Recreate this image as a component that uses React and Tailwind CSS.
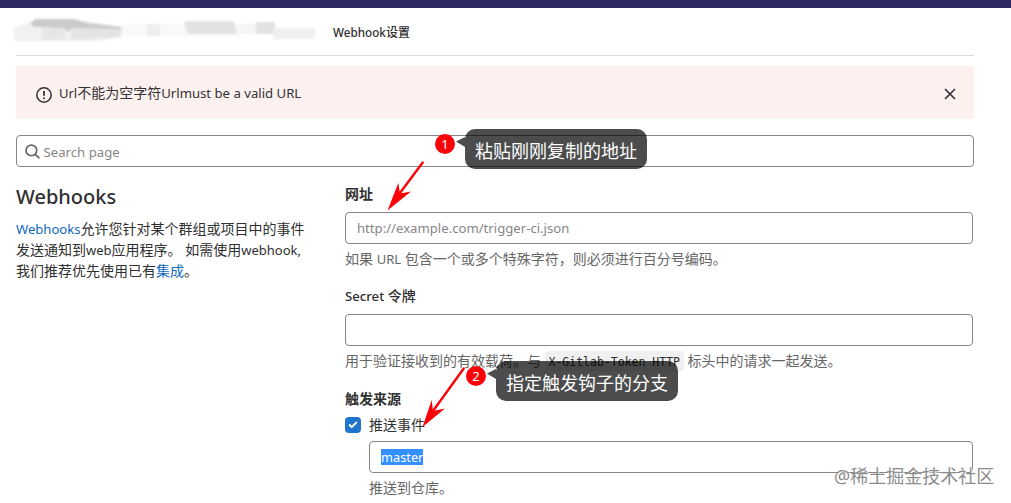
import { Check } from "lucide-react";

function Latin({ children, className = "text-[13px]" }) {
  return <span className={`leading-none ${className}`}>{children}</span>;
}

function Breadcrumb() {
  return (
    <div className="mr-[37px] ml-4 flex h-12 items-center border-b border-[#dbdbdb]">
      <svg className="-ml-1 h-9 w-[321px] shrink-0" viewBox="12 14 321 36" aria-hidden="true">
        <defs>
          <filter id="soft" x="-10%" y="-30%" width="120%" height="160%">
            <feGaussianBlur stdDeviation="1.2" />
          </filter>
        </defs>
        <g filter="url(#soft)">
          <path d="M14 27 L34 21 L85 21 L122 27 L122 37 L100 41 L14 41Z" fill="#f1f1f1" />
          <path d="M30 23 L36 19 L74 19 L88 23 L121 27 L121 30 L71 29 L68 32 L64 28 L34 27Z" fill="#cbcbcb" />
          <path d="M42 28 L65 28 L65 40 L42 40Z" fill="#e6e6e6" />
          <path d="M71 28 L121 29 L121 37 L71 40Z" fill="#e4e4e4" />
          <path d="M122 24h118v12h-118Z" fill="#f9f9f9" />
          <path d="M147 24h13v12h-13Z" fill="#eeeeee" />
          <path d="M184 21h50l3 13h-50Z" fill="#e2e2e2" />
          <path d="M238 24h20v10h-20Z" fill="#f5f5f5" />
          <path d="M256 22h19v12h-19Z" fill="#e2e2e2" />
          <path d="M273 28h42v11h-42Z" fill="#f0f0f0" />
        </g>
      </svg>
      <span className="mt-[3px] text-xs font-medium whitespace-nowrap text-[#303030]">
        <Latin className="text-[11.7px]">Webhook</Latin>设置
      </span>
    </div>
  );
}

function Alert() {
  return (
    <div className="mr-[37px] ml-4 mt-[10px] flex h-[53px] items-center bg-[#fcf1ee] pr-[18px] pl-5 text-[#333238]">
      <svg className="mt-1 size-4" viewBox="0 0 16 16" fill="none" stroke="currentColor" strokeWidth="1.5">
        <circle cx="8" cy="8" r="7.2" />
        <path d="M8 4v4.8" strokeWidth="1.8" />
        <circle cx="8" cy="11.2" r="1" fill="currentColor" stroke="none" />
      </svg>
      <span className="ml-[7px] flex-1 text-sm whitespace-nowrap">
        <Latin>Url</Latin>不能为空字符<Latin className="text-[13.15px]">Urlmust be a valid URL</Latin>
      </span>
      <svg className="mt-[3px] size-3" viewBox="0 0 12 12" fill="none" stroke="currentColor" strokeWidth="1.7" strokeLinecap="round">
        <path d="M1.5 1.5 10.5 10.5M10.5 1.5 1.5 10.5" />
      </svg>
    </div>
  );
}

function Field({ children, className = "" }) {
  return (
    <div className={`flex h-8 items-center rounded border border-[#868686] bg-white px-[11px] text-[13px] ${className}`}>
      {children}
    </div>
  );
}

function Callout({ number, text, className }) {
  return (
    <div className={`absolute flex ${className}`}>
      <span className="mt-[5px] flex size-5 items-center justify-center rounded-full bg-[#fa0308] pt-px text-[13px] leading-none text-white">
        {number}
      </span>
      <svg className="mt-[7px] h-3 w-[10px]" viewBox="0 0 10 12" aria-hidden="true">
        <path d="M1 5.5 10 1V11Z" fill="#000" fillOpacity=".7" />
      </svg>
      <span className="flex h-10 w-[182px] items-center justify-center rounded-[10px] bg-black/70 pt-[3px] text-lg whitespace-nowrap text-white">
        {text}
      </span>
    </div>
  );
}

export default function App() {
  return (
    <div className="relative h-[503px] w-[1011px] overflow-hidden bg-white font-['Noto_Sans','Noto_Sans_CJK_SC',sans-serif] text-[#303030]">
      <div className="h-2 bg-[#2b2960]" />
      <Breadcrumb />
      <Alert />
      <div className="mt-4 mr-[37px] ml-4 flex h-8 items-center rounded border border-[#868686] pl-2 text-[#666]">
        <svg className="size-[15px]" viewBox="0 0 16 16" fill="none" stroke="currentColor" strokeWidth="1.8" strokeLinecap="round">
          <circle cx="6.8" cy="6.8" r="5.7" />
          <path d="m11 11 3.8 3.8" />
        </svg>
        <span className="mt-[3px] ml-[3.5px] text-[13.2px] text-[#868686]">Search page</span>
      </div>

      <main className="flex pl-4">
        <section className="w-[329px] shrink-0 pt-[15px]">
          <h1 className="text-[20px] leading-[29px] font-medium">Webhooks</h1>
          <p className="mt-[7px] text-sm leading-[21px] whitespace-nowrap">
            <Latin className="text-[13.1px] text-[#1068bf]">Webhooks</Latin>允许您针对某个群组或项目中的事件
            <br />
            发送通知到<Latin>web</Latin>应用程序。 如需使用<Latin>webhook,</Latin>
            <br />
            我们推荐优先使用已有<span className="text-[#1068bf]">集成</span>。
          </p>
        </section>

        <section className="w-[628px] pt-4 text-sm whitespace-nowrap">
          <div className="h-[21px] leading-[21px] font-bold">网址</div>
          <Field className="mt-2 text-[#868686]">
            <span className="text-[13.15px]">http://example.com/trigger-ci.json</span>
          </Field>
          <div className="mt-[3px] h-6 leading-6 text-[#666]">
            如果 <Latin>URL</Latin> 包含一个或多个特殊字符，则必须进行百分号编码。
          </div>
          <div className="mt-[15px] h-5 leading-5 font-medium">
            <Latin className="text-[13.2px]">Secret</Latin> 令牌
          </div>
          <Field className="mt-2" />
          <div className="mt-[3px] flex h-6 items-center leading-6 text-[#666]">
            用于验证接收到的有效载荷。与
            <code className="ml-1 flex h-5 items-center rounded bg-[#f0f0f0] px-[3.5px] pt-[2px] font-['DejaVu_Sans_Mono',monospace] text-[11.5px] text-[#303030]">
              X-Gitlab-Token HTTP
            </code>
            <span className="ml-1">标头中的请求一起发送。</span>
          </div>
          <div className="mt-4 h-5 leading-5 font-bold">触发来源</div>
          <div className="mt-[6px] flex h-5 items-center gap-2">
            <span className="flex size-4 items-center justify-center rounded bg-[#1f75cb] text-white">
              <Check size={10} strokeWidth={4.5} />
            </span>
            推送事件
          </div>
          <div className="mt-[6px] ml-6">
            <Field>
              <span className="bg-[#3390ff] text-[12.8px] leading-4 text-white">master</span>
            </Field>
            <div className="mt-[5px] h-5 leading-5 text-[#666]">推送到仓库。</div>
          </div>
        </section>
      </main>

      <Callout number="1" text="粘贴刚刚复制的地址" className="top-[129px] left-[435px]" />
      <svg className="absolute top-[160px] left-[386px] h-[52px] w-[39px]" viewBox="386 160 39 52" aria-hidden="true">
        <path d="M422.7 162.5 400 193" stroke="#fa0308" strokeWidth="2.4" strokeLinecap="round" />
        <path d="M387.5 210.5 398.3 183 400 193.5 411 191.5Z" fill="#fa0308" />
      </svg>
      <Callout number="2" text="指定触发钩子的分支" className="top-[361px] left-[466px]" />
      <svg className="absolute top-[366px] left-[421px] h-[63px] w-[45px]" viewBox="421 366 45 63" aria-hidden="true">
        <path d="M463.7 368.5 433 411" stroke="#fa0308" strokeWidth="2.4" strokeLinecap="round" />
        <path d="M422.5 427 431.7 400 433 411 445 408.5Z" fill="#fa0308" />
      </svg>
      <div className="absolute top-[464px] left-[834px] text-lg leading-6 whitespace-nowrap text-[#8c8c8c] [text-shadow:1px_1px_1px_#ffffff]">
        @稀土掘金技术社区
      </div>
    </div>
  );
}
